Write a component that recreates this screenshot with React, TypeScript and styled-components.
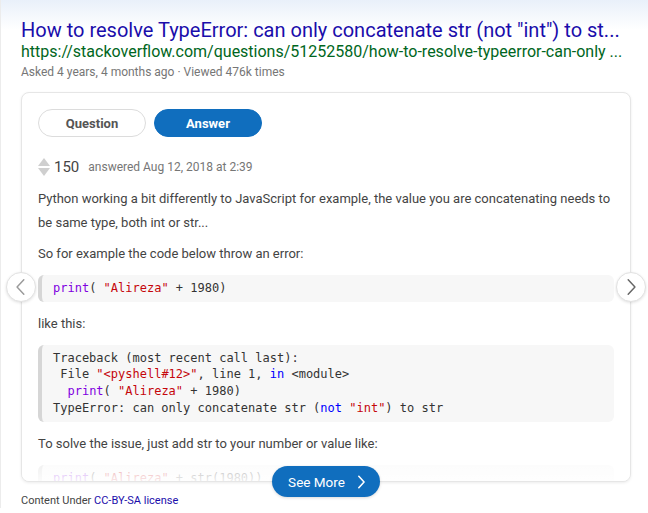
import React from "react";
import styled, { createGlobalStyle } from "styled-components";

const Global = createGlobalStyle`
  html, body { margin: 0; padding: 0; background: #fff; }
  body {
    font-family: Roboto, "Noto Sans", Arial, sans-serif;
    background: linear-gradient(to bottom, #e9f0fa 0px, #ffffff 30px) no-repeat;
    min-height: 513px;
  }
`;

const Page = styled.div`
  padding: 18px 17px 0 20px;
  width: 648px;
  box-sizing: border-box;
  border-left: 1px solid #ececec;
`;

const Title = styled.a`
  display: block;
  font-size: 20px;
  line-height: 24px;
  color: #1a0dab;
  text-decoration: none;
  white-space: nowrap;
`;

const Url = styled.div`
  font-size: 16px;
  line-height: 20px;
  color: #006621;
  white-space: nowrap;
`;

const Meta = styled.div`
  font-size: 12px;
  line-height: 19px;
  color: #767676;
  margin-top: 1px;
`;

const CardWrap = styled.div`
  position: relative;
  margin-top: 10px;
  width: 610px;
`;

const Card = styled.div`
  height: 390px;
  box-sizing: border-box;
  border: 1px solid #e6e6e6;
  border-radius: 8px;
  box-shadow: 0 1px 3px rgba(0, 0, 0, 0.08);
  padding: 16px 16px 0 16px;
  overflow: hidden;
  position: relative;
  background: #fff;
`;

const Tabs = styled.div`
  display: flex;
  gap: 8px;
`;

const Tab = styled.button<{ $active?: boolean }>`
  width: 108px;
  height: 28px;
  border-radius: 14px;
  font-family: Roboto, Arial, sans-serif;
  font-size: 13px;
  font-weight: 700;
  cursor: pointer;
  border: 1px solid ${(p) => (p.$active ? "#106ebe" : "#dcdcdc")};
  background: ${(p) => (p.$active ? "#106ebe" : "#fff")};
  color: ${(p) => (p.$active ? "#fff" : "#555")};
  padding: 0;
`;

const VoteRow = styled.div`
  display: flex;
  align-items: center;
  height: 20px;
  margin-top: 20px;
`;

const VoteCount = styled.span`
  font-size: 15px;
  color: #444;
  margin-left: 4px;
`;

const Answered = styled.span`
  font-size: 12px;
  color: #767676;
  margin-left: 9px;
`;

const Para = styled.p<{ $top: number }>`
  margin: ${(p) => p.$top}px 0 0 0;
  font-size: 13px;
  line-height: 24px;
  color: #444;
`;

const Code = styled.pre<{ $top: number }>`
  margin: ${(p) => p.$top}px 0 0 0;
  background: #f7f7f7;
  border-left: 4px solid #d6d6d6;
  border-radius: 6px;
  padding: 5px 11px;
  font-family: "DejaVu Sans Mono", "Liberation Mono", monospace;
  font-size: 12px;
  line-height: 16.7px;
  color: #333;
  white-space: pre;
`;

const Kw = styled.span`
  color: #8000e0;
`;
const Str = styled.span`
  color: #c5060b;
`;
const Op = styled.span`
  color: #0000ff;
`;

const Fade = styled.div`
  position: absolute;
  left: 0;
  right: 0;
  bottom: 0;
  height: 30px;
  background: linear-gradient(to bottom, rgba(255, 255, 255, 0.45), rgba(255, 255, 255, 0.72) 60%, rgba(255, 255, 255, 0.9));
`;

const NavBtn = styled.button<{ $side: "left" | "right" }>`
  position: absolute;
  top: 180px;
  ${(p) => (p.$side === "left" ? "left: -15px;" : "right: -15px;")}
  width: 30px;
  height: 30px;
  border-radius: 50%;
  background: #fff;
  border: 1px solid #e2e2e2;
  box-shadow: 0 1px 3px rgba(0, 0, 0, 0.12);
  display: flex;
  align-items: center;
  justify-content: center;
  padding: 0;
`;

const SeeMore = styled.button`
  position: absolute;
  top: 374px;
  left: 251px;
  width: 108px;
  height: 31px;
  border-radius: 16px;
  border: none;
  background: #106ebe;
  color: #fff;
  font-family: Roboto, Arial, sans-serif;
  font-size: 13.5px;
  display: flex;
  align-items: center;
  justify-content: center;
  gap: 9px;
  padding: 0 0 0 4px;
  box-shadow: 0 1px 3px rgba(0, 0, 0, 0.15);
`;

const Footer = styled.div`
  margin-top: 12px;
  font-size: 11px;
  line-height: 14px;
  color: #444;
`;

const FooterLink = styled.a`
  color: #1a0dab;
  text-decoration: none;
`;

const Chevron = ({ dir, color, size, w = 1.3 }: { dir: "left" | "right"; color: string; size: number; w?: number }) => (
  <svg width={size} height={size} viewBox="0 0 16 16" fill="none">
    <path
      d={dir === "left" ? "M10.5 1.5 L4.5 8 L10.5 14.5" : "M5.5 1.5 L11.5 8 L5.5 14.5"}
      stroke={color}
      strokeWidth={w}
      strokeLinecap="round"
      strokeLinejoin="round"
    />
  </svg>
);

const VoteIcon = () => (
  <svg width="12" height="18" viewBox="0 0 12 18">
    <path d="M6 0 L12 8 L0 8 Z" fill="#cfcfcf" />
    <path d="M0 10 L12 10 L6 18 Z" fill="#cfcfcf" />
  </svg>
);

export default function App() {
  return (
    <>
      <Global />
      <Page>
        <Title href="#">How to resolve TypeError: can only concatenate str (not "int") to st...</Title>
        <Url>https://stackoverflow.com/questions/51252580/how-to-resolve-typeerror-can-only ...</Url>
        <Meta>Asked 4 years, 4 months ago · Viewed 476k times</Meta>
        <CardWrap>
          <Card>
            <Tabs>
              <Tab>Question</Tab>
              <Tab $active>Answer</Tab>
            </Tabs>
            <VoteRow>
              <VoteIcon />
              <VoteCount>150</VoteCount>
              <Answered>answered Aug 12, 2018 at 2:39</Answered>
            </VoteRow>
            <Para $top={10}>
              Python working a bit differently to JavaScript for example, the value you are concatenating needs to be
              same type, both int or str...
            </Para>
            <Para $top={7}>So for example the code below throw an error:</Para>
            <Code $top={9}>
              <Kw>print</Kw>( <Str>"Alireza"</Str> + 1980)
            </Code>
            <Para $top={10}>like this:</Para>
            <Code $top={9}>
              {"Traceback (most recent call last):\n File "}
              <Str>"&lt;pyshell#12&gt;"</Str>
              {", line 1, "}
              <Op>in</Op>
              {" <module>\n  "}
              <Kw>print</Kw>( <Str>"Alireza"</Str>
              {" + 1980)\nTypeError: can only concatenate str ("}
              <Op>not</Op> <Str>"int"</Str>
              {") to str"}
            </Code>
            <Para $top={10}>To solve the issue, just add str to your number or value like:</Para>
            <Code $top={9}>
              <Kw>print</Kw>( <Str>"Alireza"</Str> + str(1980))
            </Code>
            <Fade />
          </Card>
          <NavBtn $side="left" aria-label="Previous">
            <Chevron dir="left" color="#9a9a9a" size={18} />
          </NavBtn>
          <NavBtn $side="right" aria-label="Next">
            <Chevron dir="right" color="#666" size={18} />
          </NavBtn>
          <SeeMore>
            See More
            <Chevron dir="right" color="#fff" size={14} w={1.8} />
          </SeeMore>
        </CardWrap>
        <Footer>
          Content Under <FooterLink href="#">CC-BY-SA license</FooterLink>
        </Footer>
      </Page>
    </>
  );
}
